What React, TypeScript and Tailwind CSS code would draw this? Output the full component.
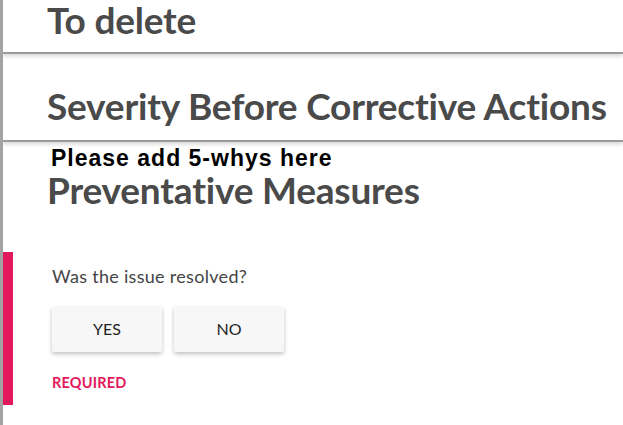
import React from "react";

const heading = "font-bold text-[#4a4a4a] text-[37px] leading-[1.1] tracking-[-0.2px]";

export default function App() {
  return (
    <div
      className="w-[623px] h-[425px] overflow-hidden bg-white border-l-[3px] border-[#a3a3a3]"
      style={{ fontFamily: "Lato, 'Noto Sans', sans-serif" }}
    >
      <div className="h-[54px] border-b-2 border-[#9a9a9a] shadow-[0_3px_3px_rgba(0,0,0,0.12)] pl-[44px]">
        <h2 className={heading}>To delete</h2>
      </div>
      <div className="h-[87px] border-b-2 border-[#9a9a9a] shadow-[0_3px_3px_rgba(0,0,0,0.12)] pl-[44px] pt-[31px] mt-[1px]">
        <h2 className={heading}>Severity Before Corrective Actions</h2>
      </div>
      <div className="pl-[48px] pt-[5px]">
        <p
          className="font-bold text-black text-[23px] leading-none tracking-[1px]"
          style={{ fontFamily: "'Liberation Sans', Arial, sans-serif" }}
        >
          Please add 5-whys here
        </p>
      </div>
      <div className="pl-[44px]">
        <h2 className={heading}>Preventative Measures</h2>
      </div>
      <div className="mt-[41px] flex">
        <div className="w-[10px] h-[153px] bg-[#e2195b]" />
        <div className="pl-[39px] pt-[15px]">
          <p className="text-[18px] text-[#444] leading-none tracking-[0.3px]">Was the issue resolved?</p>
          <div className="flex gap-[12px] mt-[22px]">
            <button className="w-[110px] h-[45px] bg-[#f7f7f7] rounded-[2px] shadow-[0_2px_4px_rgba(0,0,0,0.25)] text-[16px] text-[#1f1f1f]">
              YES
            </button>
            <button className="w-[110px] h-[45px] bg-[#f7f7f7] rounded-[2px] shadow-[0_2px_4px_rgba(0,0,0,0.25)] text-[16px] text-[#1f1f1f]">
              NO
            </button>
          </div>
          <p className="mt-[24px] text-[14.5px] font-bold text-[#e2195b] leading-none tracking-[0.2px]">
            REQUIRED
          </p>
        </div>
      </div>
    </div>
  );
}
